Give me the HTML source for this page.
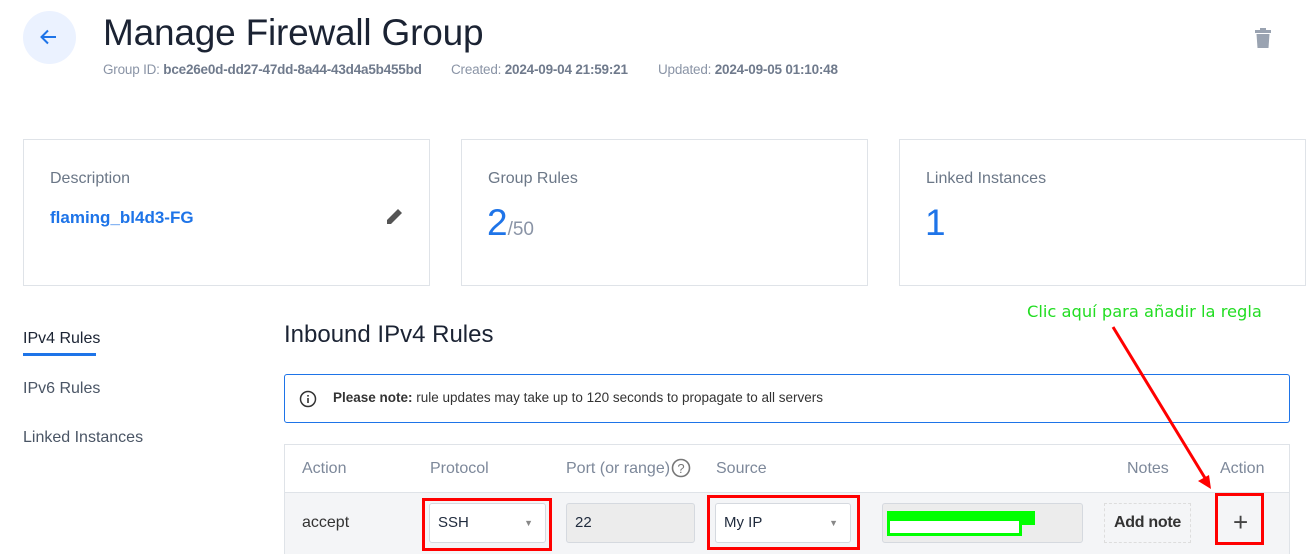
<!DOCTYPE html>
<html><head><meta charset="utf-8"><style>
*{margin:0;padding:0;box-sizing:border-box}
body{width:1308px;height:554px;overflow:hidden;background:#fff;font-family:"Liberation Sans",sans-serif;position:relative;color:#1f2a3c}
.a{position:absolute}
.card{position:absolute;top:139px;width:407px;height:147px;border:1px solid #dfe3e8;background:#fff}
.card .l{position:absolute;left:26px;top:30px;font-size:16px;color:#6b7787}
.meta{font-size:13.5px;color:#8a94a6;letter-spacing:-0.2px}
.meta b{color:#6f7a8c}
.th{position:absolute;top:460px;font-size:16px;color:#7d889a}
.box{position:absolute;border:1px solid #d5d9df;border-radius:3px;background:#fff;font-size:15px;padding-left:8px;line-height:38px}
.red{position:absolute;border:3px solid #f00}
</style></head><body>
<div class="a" style="left:23px;top:11px;width:53px;height:53px;border-radius:50%;background:#ebf2ff"></div>
<svg class="a" style="left:38px;top:26px" width="22" height="22" viewBox="0 0 22 22"><path d="M18 11H4M10 4.5L3.5 11l6.5 6.5" stroke="#1e74e8" stroke-width="2" fill="none"/></svg>
<div class="a" style="left:103px;top:12px;font-size:37px;font-weight:300;color:#1b2333;letter-spacing:-0.2px">Manage Firewall Group</div>
<div class="a meta" style="left:103px;top:62px">Group ID: <b>bce26e0d-dd27-47dd-8a44-43d4a5b455bd</b></div>
<div class="a meta" style="left:451px;top:62px">Created: <b>2024-09-04 21:59:21</b></div>
<div class="a meta" style="left:658px;top:62px">Updated: <b>2024-09-05 01:10:48</b></div>
<svg class="a" style="left:1254px;top:27px" width="18" height="22" viewBox="0 0 18 22"><rect x="1" y="3" width="16" height="3" fill="#9aa3b1"/><rect x="6" y="1" width="6" height="3" fill="#9aa3b1"/><path d="M2.5 7h13l-1 14h-11z" fill="#9aa3b1"/></svg>

<div class="card" style="left:23px"><div class="l">Description</div>
<div class="a" style="left:26px;top:68px;font-size:17px;font-weight:bold;color:#1e74e8">flaming_bl4d3-FG</div>
<svg class="a" style="left:361px;top:66px" width="20" height="20" viewBox="0 0 20 20"><path d="M2 18v-4L13 3l4 4L6 18z" fill="#555"/></svg></div>
<div class="card" style="left:461px"><div class="l">Group Rules</div>
<div class="a" style="left:25px;top:62px;font-size:37px;font-weight:300;color:#1e74e8">2<span style="font-size:19px;color:#8a94a6">/50</span></div></div>
<div class="card" style="left:899px"><div class="l">Linked Instances</div>
<div class="a" style="left:25px;top:62px;font-size:37px;font-weight:300;color:#1e74e8">1</div></div>

<div class="a" style="left:23px;top:330px;font-size:16px;color:#1b2333">IPv4 Rules</div>
<div class="a" style="left:23px;top:353px;width:73px;height:3px;background:#1e74e8"></div>
<div class="a" style="left:23px;top:380px;font-size:16px;color:#4a5565">IPv6 Rules</div>
<div class="a" style="left:23px;top:429px;font-size:16px;color:#4a5565">Linked Instances</div>

<div class="a" style="left:284px;top:321px;font-size:24px;color:#1b2333">Inbound IPv4 Rules</div>
<div class="a" style="left:1027px;top:302px;color:#22dd22;font-family:'DejaVu Sans',sans-serif;font-size:16.3px">Clic aquí para añadir la regla</div>
<div class="a" style="left:284px;top:374px;width:1006px;height:49px;border:1px solid #1e74e8;border-radius:3px"></div>
<svg class="a" style="left:299px;top:390px" width="18" height="18" viewBox="0 0 18 18"><circle cx="9" cy="9" r="7.5" stroke="#333" stroke-width="1.5" fill="none"/><rect x="8.2" y="8" width="1.6" height="5" fill="#333"/><rect x="8.2" y="5" width="1.6" height="1.6" fill="#333"/></svg>
<div class="a" style="left:333px;top:390px;font-size:13.5px;color:#333"><b>Please note:</b> rule updates may take up to 120 seconds to propagate to all servers</div>

<div class="a" style="left:284px;top:444px;width:1006px;height:110px;border:1px solid #dfe3e8;border-bottom:none"></div>
<div class="a" style="left:285px;top:492px;width:1004px;height:62px;background:#f4f5f7;border-top:1px solid #dfe3e8"></div>
<div class="th" style="left:302px">Action</div>
<div class="th" style="left:430px">Protocol</div>
<div class="th" style="left:566px">Port (or range)</div>
<svg class="a" style="left:671px;top:458px" width="20" height="20" viewBox="0 0 20 20"><circle cx="10" cy="10" r="8.5" stroke="#777" stroke-width="1.6" fill="none"/><text x="10" y="15" font-size="13" text-anchor="middle" fill="#777" font-family="Liberation Sans">?</text></svg>
<div class="th" style="left:716px">Source</div>
<div class="th" style="left:1127px">Notes</div>
<div class="th" style="left:1220px">Action</div>

<div class="a" style="left:302px;top:514px;font-size:16px;color:#333">accept</div>
<div class="box" style="left:429px;top:503px;width:117px;height:40px">SSH<span style="position:absolute;right:12px;font-size:9px;color:#888">▼</span></div>
<div class="box" style="left:566px;top:503px;width:129px;height:40px;background:#ececec">22</div>
<div class="box" style="left:715px;top:503px;width:136px;height:40px">My IP<span style="position:absolute;right:12px;font-size:9px;color:#888">▼</span></div>
<div class="box" style="left:882px;top:503px;width:201px;height:40px;background:#ececec"></div>
<div class="a" style="left:887px;top:511px;width:148px;height:14px;background:#0f0"></div>
<div class="a" style="left:887px;top:518px;width:135px;height:18px;border:3px solid #0f0;background:#fff"></div>
<div class="a" style="left:1104px;top:503px;width:87px;height:40px;border:1px dashed #ddd;font-size:16px;font-weight:bold;text-align:center;line-height:38px;color:#333;letter-spacing:-0.3px">Add note</div>
<div class="a" style="left:1233px;top:507px;font-size:26px;color:#444;font-weight:300">+</div>

<div class="red" style="left:422px;top:498px;width:130px;height:53px"></div>
<div class="red" style="left:707px;top:495px;width:153px;height:55px"></div>
<div class="red" style="left:1215px;top:493px;width:49px;height:52px"></div>
<svg class="a" style="left:0;top:0" width="1308" height="554"><line x1="1113" y1="327" x2="1205" y2="478" stroke="#f00" stroke-width="3"/><path d="M1211 489l-13-8 11-6z" fill="#f00"/></svg>
</body></html>
